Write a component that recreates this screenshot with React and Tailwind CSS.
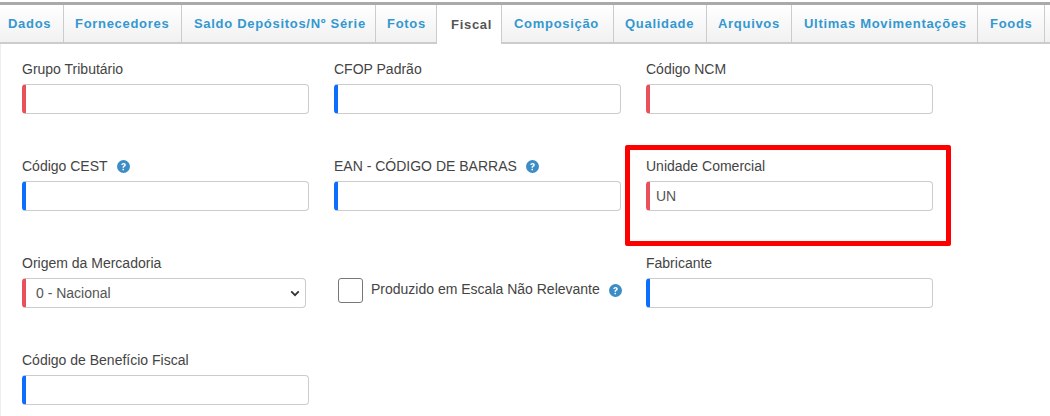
import React from 'react';

const TABS = [
    { label: 'Dados', width: 'w-[64px]', pad: 'pl-[8px]' },
    { label: 'Fornecedores', width: 'w-[118px]', pad: 'pl-[11px]' },
    { label: 'Saldo Depósitos/Nº Série', width: 'w-[194px]', pad: 'pl-[12px]' },
    { label: 'Fotos', width: 'w-[61px]', pad: 'pl-[11px]' },
    { label: 'Fiscal', width: 'w-[65px]', pad: 'pl-[14px]', active: true },
    { label: 'Composição', width: 'w-[112px]', pad: 'pl-[12px]' },
    { label: 'Qualidade', width: 'w-[93px]', pad: 'pl-[11px]' },
    { label: 'Arquivos', width: 'w-[85px]', pad: 'pl-[11px]' },
    { label: 'Ultimas Movimentações', width: 'w-[186px]', pad: 'pl-[12px]' },
    { label: 'Foods', width: 'w-[67px]', pad: 'pl-[12px]' },
];

function Help({ className }) {
    return (
        <svg viewBox="0 0 24 24" className={`w-[13px] h-[13px] shrink-0 ${className}`}>
            <circle cx="12" cy="12" r="12" fill="#3c8dc5" />
            <path d="M8 9.300c.2-2.300 1.900-3.600 4.200-3.600 2.400 0 4 1.400 4 3.300 0 1.600-.9 2.400-2 3.100-1 .6-1.300 1-1.300 2v.3h-2.700v-.6c0-1.500.5-2.300 1.700-3 1-.6 1.500-1 1.500-1.800 0-.8-.6-1.300-1.400-1.300-.9 0-1.400.6-1.500 1.600z" fill="#fff" />
            <rect x="10.200" y="16" width="2.800" height="2.800" rx=".5" fill="#fff" />
        </svg>
    );
}

function Field({ label, help, color, value }) {
    return (
        <div className="w-[312px] h-[97px] pt-[16px]">
            <div className="h-[18px] flex items-center gap-[9px] text-[14px] leading-[18px] text-[#444]">
                {label}
                {help && <Help />}
            </div>
            <div className={`mt-[6px] w-[287px] h-[30px] flex items-center rounded-[4px] border border-[#ccc] border-l-4 pl-[6px] text-[14px] text-[#555] ${color}`}>
                {value}
            </div>
        </div>
    );
}

export default function App() {
    return (
        <div className="relative w-[1050px] h-[416px] overflow-hidden bg-white font-['Liberation_Sans',Arial,sans-serif]">
            {/* TABS */}
            <div className="mt-[2px] h-[3px] bg-[#aaa]" />
            <div className="flex h-[39px] border-b-2 border-[#ccc] bg-gradient-to-b from-white to-[#f1f1f1]">
                {TABS.map(t => (
                    <div key={t.label}
                        className={`${t.width} ${t.pad} shrink-0 border-r border-[#ccc] flex items-center text-[13px] font-bold tracking-[0.7px] whitespace-nowrap
                            ${t.active ? 'bg-white text-[#555] h-[39px] z-10' : 'text-[#3498d0]'}`}>
                        {t.label}
                    </div>
                ))}
            </div>

            {/* FORM */}
            <div className="pl-[21px] h-[372px] border-l border-[#eee] grid grid-cols-[312px_312px_312px] content-start">
                <Field label="Grupo Tributário" color="border-l-[#e8505b]" />
                <Field label="CFOP Padrão" color="border-l-[#0d6efd]" />
                <Field label="Código NCM" color="border-l-[#e8505b]" />

                <Field label="Código CEST" help color="border-l-[#0d6efd]" />
                <Field label="EAN - CÓDIGO DE BARRAS" help color="border-l-[#0d6efd]" />
                <Field label="Unidade Comercial" color="border-l-[#e8505b]" value="UN" />

                <div className="w-[312px] h-[97px] pt-[16px]">
                    <div className="h-[18px] flex items-center text-[14px] text-[#444]">Origem da Mercadoria</div>
                    <div className="mt-[6px] w-[284px] h-[30px] flex items-center justify-between rounded-[4px] border border-[#ccc] border-l-4 border-l-[#e8505b] pl-[10px] pr-[5px] text-[14px] text-[#555]">
                        0 - Nacional
                        <svg viewBox="0 0 12 12" className="w-[10px] h-[10px]">
                            <path d="M1.500 4l4.500 4.500L10.500 4" fill="none" stroke="#333" strokeWidth="2.200" />
                        </svg>
                    </div>
                </div>
                <div className="w-[312px] h-[97px] pt-[40px] pl-[4px] flex items-start">
                    <div className="w-[25px] h-[25px] rounded-[3px] border border-[#777] bg-white shrink-0" />
                    <span className="ml-[8px] mt-[2px] text-[14px] leading-[18px] text-[#444] whitespace-nowrap">Produzido em Escala Não Relevante</span>
                    <Help className="ml-[9px] mt-[6px]" />
                </div>
                <Field label="Fabricante" color="border-l-[#0d6efd]" />

                <Field label="Código de Benefício Fiscal" color="border-l-[#0d6efd]" />
            </div>

            {/* highlight drawn over the screenshot */}
            <div className="absolute left-[625px] top-[145px] w-[326px] h-[101px] border-[5px] border-[#ff0000] rounded-[2px]" />
        </div>
    );
}
